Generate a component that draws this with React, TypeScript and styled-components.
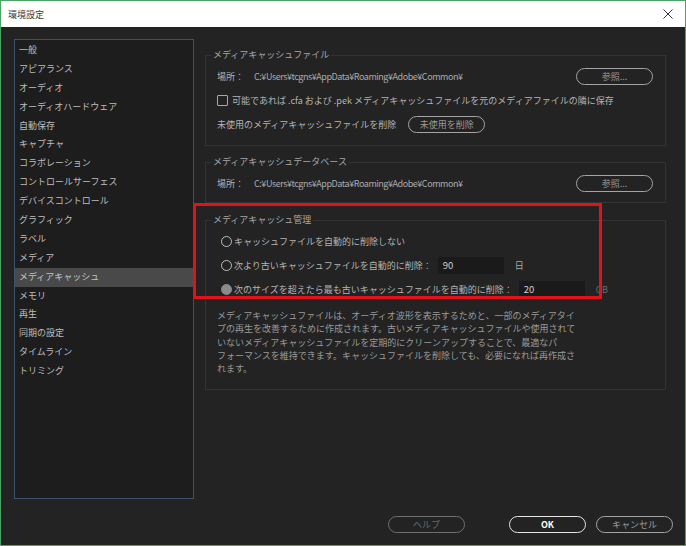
import React from "react";
import styled, { createGlobalStyle } from "styled-components";

const GlobalStyle = createGlobalStyle`
  html, body {
    margin: 0;
    padding: 0;
    background: #232323;
  }
  * {
    box-sizing: border-box;
  }
`;

const FONT = `"Noto Sans CJK JP", "Noto Sans", sans-serif`;

const Window = styled.div`
  position: relative;
  width: 686px;
  height: 546px;
  border: 1px solid #4aa564;
  background: #232323;
  display: flex;
  flex-direction: column;
  font-family: ${FONT};
  font-size: 9px;
  color: #b4b4b4;
  overflow: hidden;
`;

const TitleBar = styled.div`
  height: 26px;
  flex: 0 0 26px;
  background: #ffffff;
  display: flex;
  align-items: center;
  justify-content: space-between;
  padding: 0 12px 0 7px;
  color: #3a3a3a;
  font-size: 9px;
`;

const CloseIcon = styled.svg`
  width: 10px;
  height: 10px;
  display: block;
`;

const Body = styled.div`
  flex: 1;
  display: grid;
  grid-template-columns: 180px 1fr;
  grid-template-rows: 460px auto;
  column-gap: 11px;
  row-gap: 17px;
  padding: 12px 12px 12px 13px;
`;

const Sidebar = styled.ul`
  list-style: none;
  margin: 0;
  padding: 1px 0 0;
  border: 1px solid #3b5170;
  background: #1d1d1d;
`;

const SidebarItem = styled.li<{ $active?: boolean }>`
  height: 18.9px;
  line-height: 18.9px;
  padding-left: 4px;
  color: ${(p) => (p.$active ? "#c4c4c4" : "#bdbdbd")};
  background: ${(p) => (p.$active ? "#494949" : "transparent")};
  white-space: nowrap;
`;

const Content = styled.div`
  display: flex;
  flex-direction: column;
  padding: 10px 7px 0 0;
`;

const Group = styled.fieldset<{ $top?: number; $bottom?: number }>`
  margin: ${(p) => p.$top ?? 0}px 0 0;
  border: 1px solid #333333;
  padding: 0 12px ${(p) => p.$bottom ?? 13}px 11px;
  display: flex;
  flex-direction: column;
  gap: 8px;
`;

const Legend = styled.legend`
  margin-left: -6px;
  padding: 0 2px;
  line-height: 12px;
  color: #a6a6a6;
  font-size: 9px;
`;

const Row = styled.div<{ $first?: boolean; $indent?: number }>`
  height: 16px;
  display: flex;
  align-items: center;
  margin-top: ${(p) => (p.$first ? 7 : 0)}px;
  padding-left: ${(p) => p.$indent ?? 0}px;
  white-space: nowrap;
`;

const Path = styled.span`
  margin-left: 10px;
  letter-spacing: -0.45px;
  color: #aaaaaa;
`;

const Spacer = styled.div`
  flex: 1;
`;

const PillButton = styled.button<{ $tone?: "dim" | "normal" | "primary" }>`
  width: 77px;
  height: 17px;
  border-radius: 9px;
  background: transparent;
  font-family: ${FONT};
  font-size: 9px;
  padding: 0;
  line-height: 13px;
  border: 1.5px solid
    ${(p) =>
      p.$tone === "primary" ? "#e6e6e6" : p.$tone === "dim" ? "#6f6f6f" : "#a4a4a4"};
  color: ${(p) =>
    p.$tone === "primary" ? "#ffffff" : p.$tone === "dim" ? "#6a6a6a" : "#9a9a9a"};
  font-weight: ${(p) => (p.$tone === "primary" ? 700 : 400)};
`;

const Checkbox = styled.span`
  width: 11px;
  height: 11px;
  border: 1.5px solid #a8a8a8;
  border-radius: 1px;
  margin-right: 4px;
`;

const Radio = styled.span<{ $filled?: boolean }>`
  width: 11px;
  height: 11px;
  border-radius: 50%;
  border: 1.5px solid ${(p) => (p.$filled ? "#8a8a8a" : "#bdbdbd")};
  background: ${(p) => (p.$filled ? "#8a8a8a" : "transparent")};
  margin-right: 2px;
  flex: 0 0 11px;
`;

const TextField = styled.div`
  width: 66px;
  height: 17px;
  background: #1a1a1a;
  margin-left: 6px;
  padding-left: 5px;
  line-height: 17px;
  color: #d0d0d0;
  font-size: 9.5px;
`;

const Unit = styled.span<{ $dim?: boolean }>`
  margin-left: 11px;
  color: ${(p) => (p.$dim ? "#6c6c6c" : "#a8a8a8")};
`;

const Note = styled.p`
  margin: 4px 0 0;
  color: #9a9a9a;
  line-height: 13.3px;
  white-space: nowrap;
`;

const Footer = styled.div`
  grid-column: 1 / span 2;
  display: flex;
  justify-content: flex-end;
  gap: 10px;
`;

const FooterGap = styled.div`
  width: 24px;
`;

const Annotation = styled.div`
  position: absolute;
  left: 192px;
  top: 202px;
  width: 409px;
  height: 96px;
  border: 3px solid #e3121a;
  pointer-events: none;
`;

const categories = [
  "一般",
  "アピアランス",
  "オーディオ",
  "オーディオハードウェア",
  "自動保存",
  "キャプチャ",
  "コラボレーション",
  "コントロールサーフェス",
  "デバイスコントロール",
  "グラフィック",
  "ラベル",
  "メディア",
  "メディアキャッシュ",
  "メモリ",
  "再生",
  "同期の設定",
  "タイムライン",
  "トリミング",
];

const cachePath = "C:¥Users¥tcgns¥AppData¥Roaming¥Adobe¥Common¥";

const noteLines = [
  "メディアキャッシュファイルは、オーディオ波形を表示するためと、一部のメディアタイ",
  "プの再生を改善するために作成されます。古いメディアキャッシュファイルや使用されて",
  "いないメディアキャッシュファイルを定期的にクリーンアップすることで、最適なパ",
  "フォーマンスを維持できます。キャッシュファイルを削除しても、必要になれば再作成さ",
  "れます。",
];

export default function App() {
  return (
    <>
      <GlobalStyle />
      <Window>
        <TitleBar>
          <span>環境設定</span>
          <CloseIcon viewBox="0 0 10 10">
            <path d="M0.5 0.5 L9.5 9.5 M9.5 0.5 L0.5 9.5" stroke="#333" strokeWidth="1" />
          </CloseIcon>
        </TitleBar>
        <Body>
          <Sidebar>
            {categories.map((c) => (
              <SidebarItem key={c} $active={c === "メディアキャッシュ"}>
                {c}
              </SidebarItem>
            ))}
          </Sidebar>
          <Content>
            <Group>
              <Legend>メディアキャッシュファイル</Legend>
              <Row $first>
                <span>場所：</span>
                <Path>{cachePath}</Path>
                <Spacer />
                <PillButton>参照...</PillButton>
              </Row>
              <Row>
                <Checkbox />
                <span>可能であれば .cfa および .pek メディアキャッシュファイルを元のメディアファイルの隣に保存</span>
              </Row>
              <Row>
                <span>未使用のメディアキャッシュファイルを削除</span>
                <PillButton style={{ marginLeft: 12 }}>未使用を削除</PillButton>
              </Row>
            </Group>
            <Group $top={10} $bottom={11}>
              <Legend>メディアキャッシュデータベース</Legend>
              <Row $first>
                <span>場所：</span>
                <Path>{cachePath}</Path>
                <Spacer />
                <PillButton>参照...</PillButton>
              </Row>
            </Group>
            <Group $top={11} $bottom={14}>
              <Legend>メディアキャッシュ管理</Legend>
              <Row $first $indent={4}>
                <Radio />
                <span>キャッシュファイルを自動的に削除しない</span>
              </Row>
              <Row $indent={4}>
                <Radio />
                <span>次より古いキャッシュファイルを自動的に削除：</span>
                <TextField>90</TextField>
                <Unit>日</Unit>
              </Row>
              <Row $indent={4}>
                <Radio $filled />
                <span>次のサイズを超えたら最も古いキャッシュファイルを自動的に削除：</span>
                <TextField>20</TextField>
                <Unit $dim>GB</Unit>
              </Row>
              <Note>
                {noteLines.map((l, i) => (
                  <React.Fragment key={i}>
                    {l}
                    {i < noteLines.length - 1 && <br />}
                  </React.Fragment>
                ))}
              </Note>
            </Group>
          </Content>
          <Footer>
            <PillButton $tone="dim">ヘルプ</PillButton>
            <FooterGap />
            <PillButton $tone="primary">OK</PillButton>
            <PillButton>キャンセル</PillButton>
          </Footer>
        </Body>
        <Annotation />
      </Window>
    </>
  );
}
